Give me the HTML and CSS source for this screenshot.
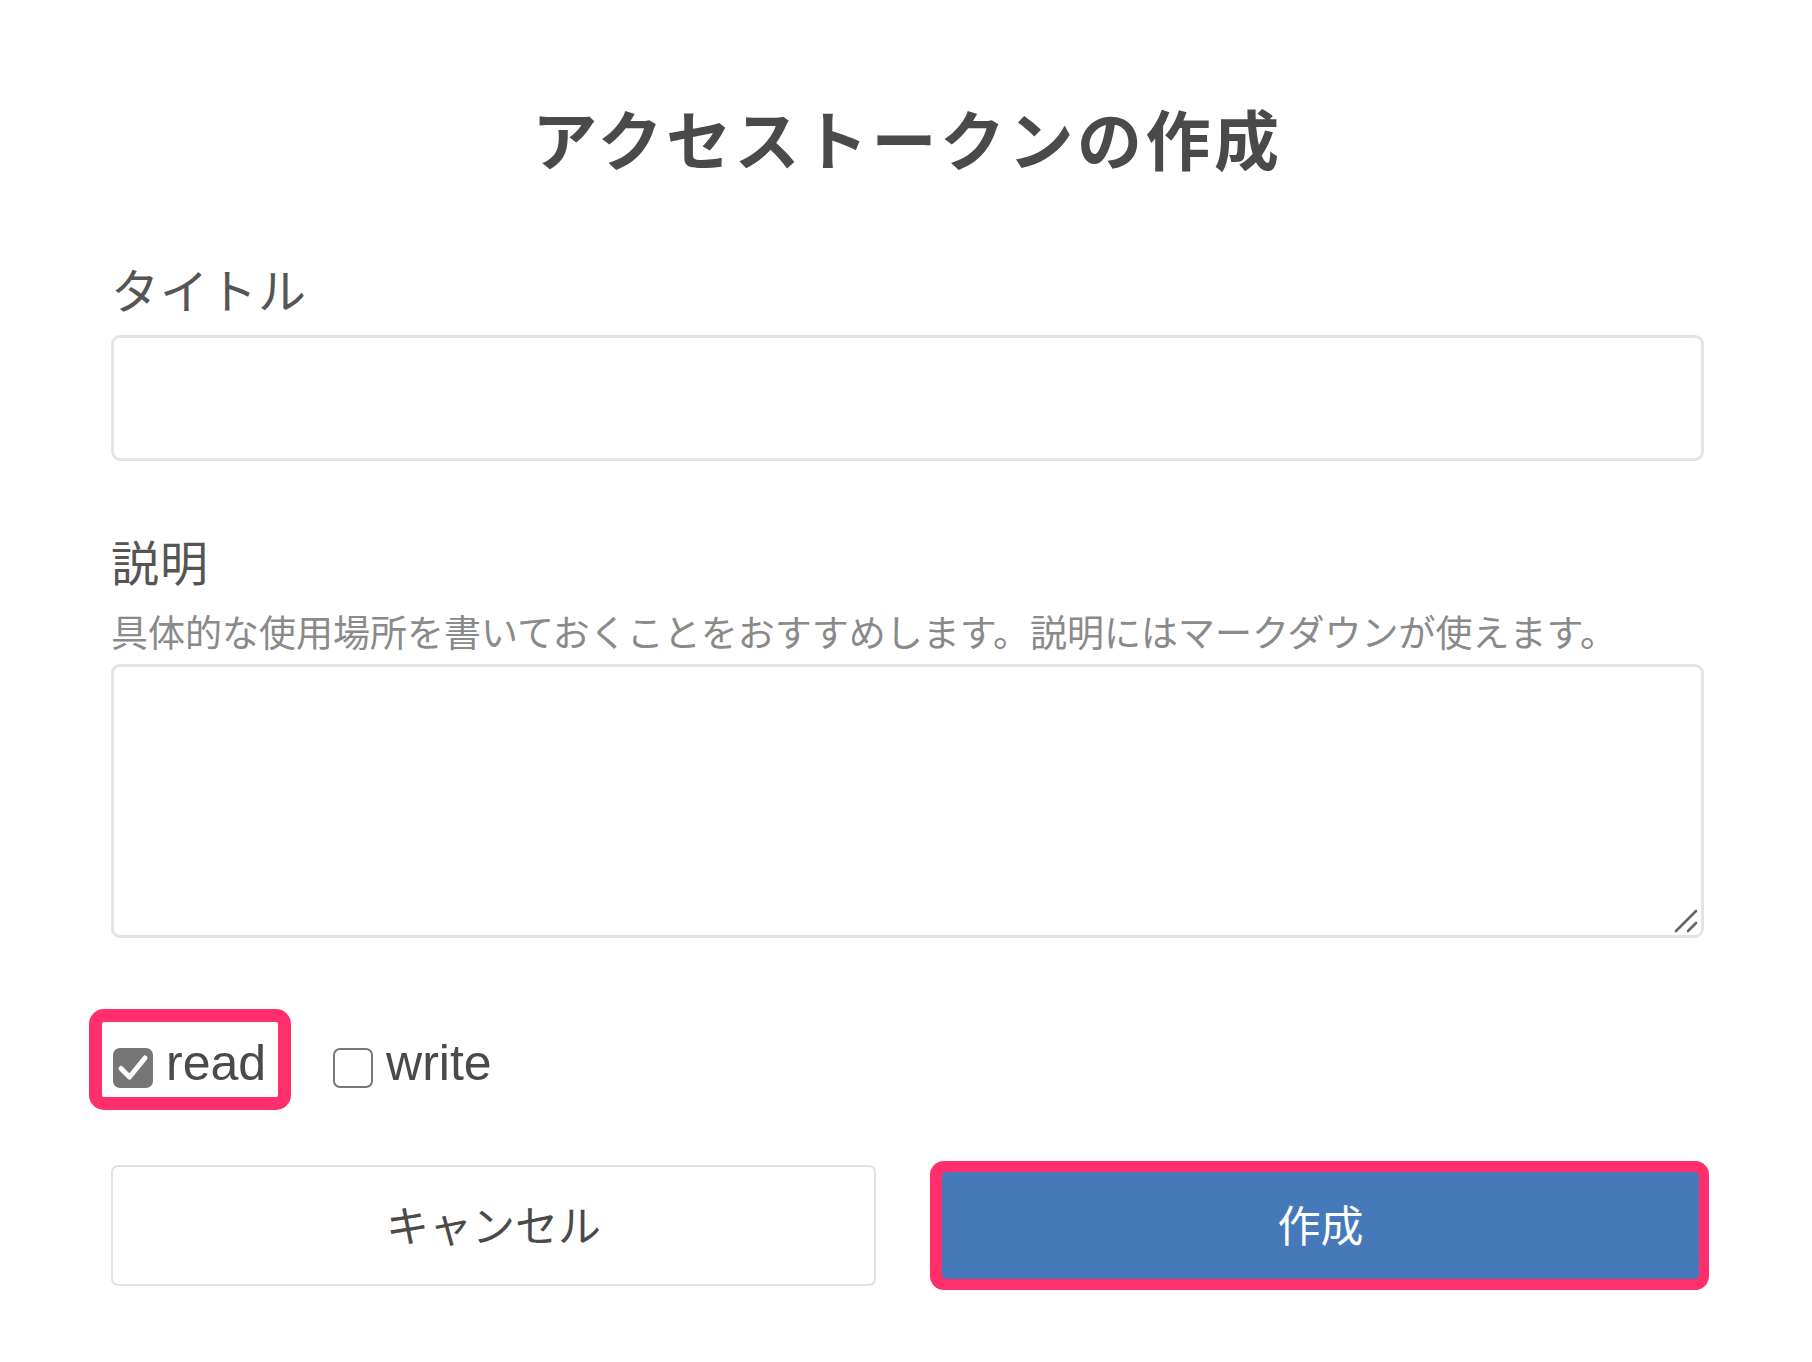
FILE: index.html
```html
<!DOCTYPE html>
<html lang="ja">
<head>
<meta charset="utf-8">
<title>アクセストークンの作成</title>
<link rel="stylesheet" href="styles.css">
</head>
<body>
<main class="page">
  <h1 class="title">アクセストークンの作成</h1>

  <div class="field field-title">
    <label class="label" for="t">タイトル</label>
    <input id="t" class="input" type="text">
  </div>

  <div class="field field-desc">
    <label class="label" for="d">説明</label>
    <p class="help">具体的な使用場所を書いておくことをおすすめします。説明にはマークダウンが使えます。</p>
    <div class="ta-wrap">
      <textarea id="d" class="textarea"></textarea>
      <svg class="grip" width="26" height="26" viewBox="0 0 26 26"><path d="M4 24 L24 4 M16 24 L24 16" stroke="#666" stroke-width="2.6" stroke-linecap="round" fill="none"/></svg>
    </div>
  </div>

  <div class="checks">
    <label class="check highlight">
      <span class="box box-on"><svg width="40" height="40" viewBox="0 0 40 40"><path d="M8 20.5 L16.5 29 L32 10" stroke="#fff" stroke-width="5" fill="none" stroke-linecap="round" stroke-linejoin="round"/></svg></span>
      <span class="check-text">read</span>
    </label>
    <label class="check">
      <span class="box"></span>
      <span class="check-text">write</span>
    </label>
  </div>

  <div class="actions">
    <button class="btn btn-cancel" type="button">キャンセル</button>
    <button class="btn btn-create" type="button">作成</button>
  </div>
</main>
</body>
</html>
```

FILE: styles.css
```css
* { box-sizing: border-box; }
html, body { margin: 0; padding: 0; background: #fff; }
body {
  font-family: "Noto Sans CJK JP", "Noto Sans", sans-serif;
  color: #4a4a4a;
}
.page {
  width: 1593px;
  margin-left: 111px;
  padding-top: 105px;
  padding-bottom: 60px;
}
.title {
  margin: 0;
  font-size: 65px;
  line-height: 65px;
  letter-spacing: 3.5px;
  font-weight: 700;
  text-align: center;
  color: #4a4a4a;
}
.field { display: flex; flex-direction: column; }
.field-title { margin-top: 94px; }
.label {
  font-size: 48px;
  line-height: 48px;
  letter-spacing: 1px;
  color: #555;
  font-weight: 400;
}
.input {
  margin-top: 23px;
  height: 126px;
  border: 3px solid #e4e4e4;
  border-radius: 9px;
  background: #fff;
  outline: none;
}
.field-desc { margin-top: 75px; }
.help {
  margin: 29px 0 0;
  font-size: 37px;
  line-height: 37px;
  color: #8a8a8a;
}
.ta-wrap {
  position: relative;
  margin-top: 14px;
  height: 274px;
}
.textarea {
  display: block;
  width: 100%;
  height: 100%;
  border: 3px solid #e4e4e4;
  border-radius: 9px;
  resize: none;
  outline: none;
  background: #fff;
}
.grip {
  position: absolute;
  right: 6px;
  bottom: 5px;
}
.checks {
  margin-top: 71px;
  margin-left: -22px;
  display: flex;
  gap: 18px;
}
.check {
  display: flex;
  align-items: flex-start;
  height: 101px;
  padding: 0 12px 0 11px;
  border: 13px solid transparent;
  border-radius: 15px;
  font-family: "Liberation Sans", Arial, sans-serif;
}
.highlight { border-color: #ff2f6b; }
.box {
  width: 40px;
  height: 40px;
  margin-top: 26px;
  border: 2.5px solid #777;
  border-radius: 7px;
  background: #fff;
  flex: none;
  display: flex;
}
.box-on {
  background: #767676;
  border-color: #767676;
}
.box-on svg { margin: -2.5px; }
.check-text {
  margin-left: 13px;
  margin-top: 16px;
  font-size: 50px;
  line-height: 50px;
  color: #4a4a4a;
}
.actions {
  margin-top: 55px;
  display: grid;
  grid-template-columns: 765px 765px;
  justify-content: space-between;
}
.btn {
  height: 121px;
  padding: 0 0 6px;
  font-family: "Noto Sans CJK JP", "Noto Sans", sans-serif;
  font-size: 43px;
  cursor: pointer;
}
.btn-cancel {
  background: #fff;
  border: 2px solid #e2e2e2;
  border-radius: 7px;
  color: #4a4a4a;
}
.btn-create {
  background: #4679b9;
  color: #fff;
  border-style: solid;
  border-color: #ff2f6b;
  border-width: 7px 5px 7px 3px;
  border-radius: 10px;
  box-shadow: 0 0 0 4px #ff2f6b, -5px 0 0 4px #ff2f6b, 1px 0 0 4px #ff2f6b;
}
```
